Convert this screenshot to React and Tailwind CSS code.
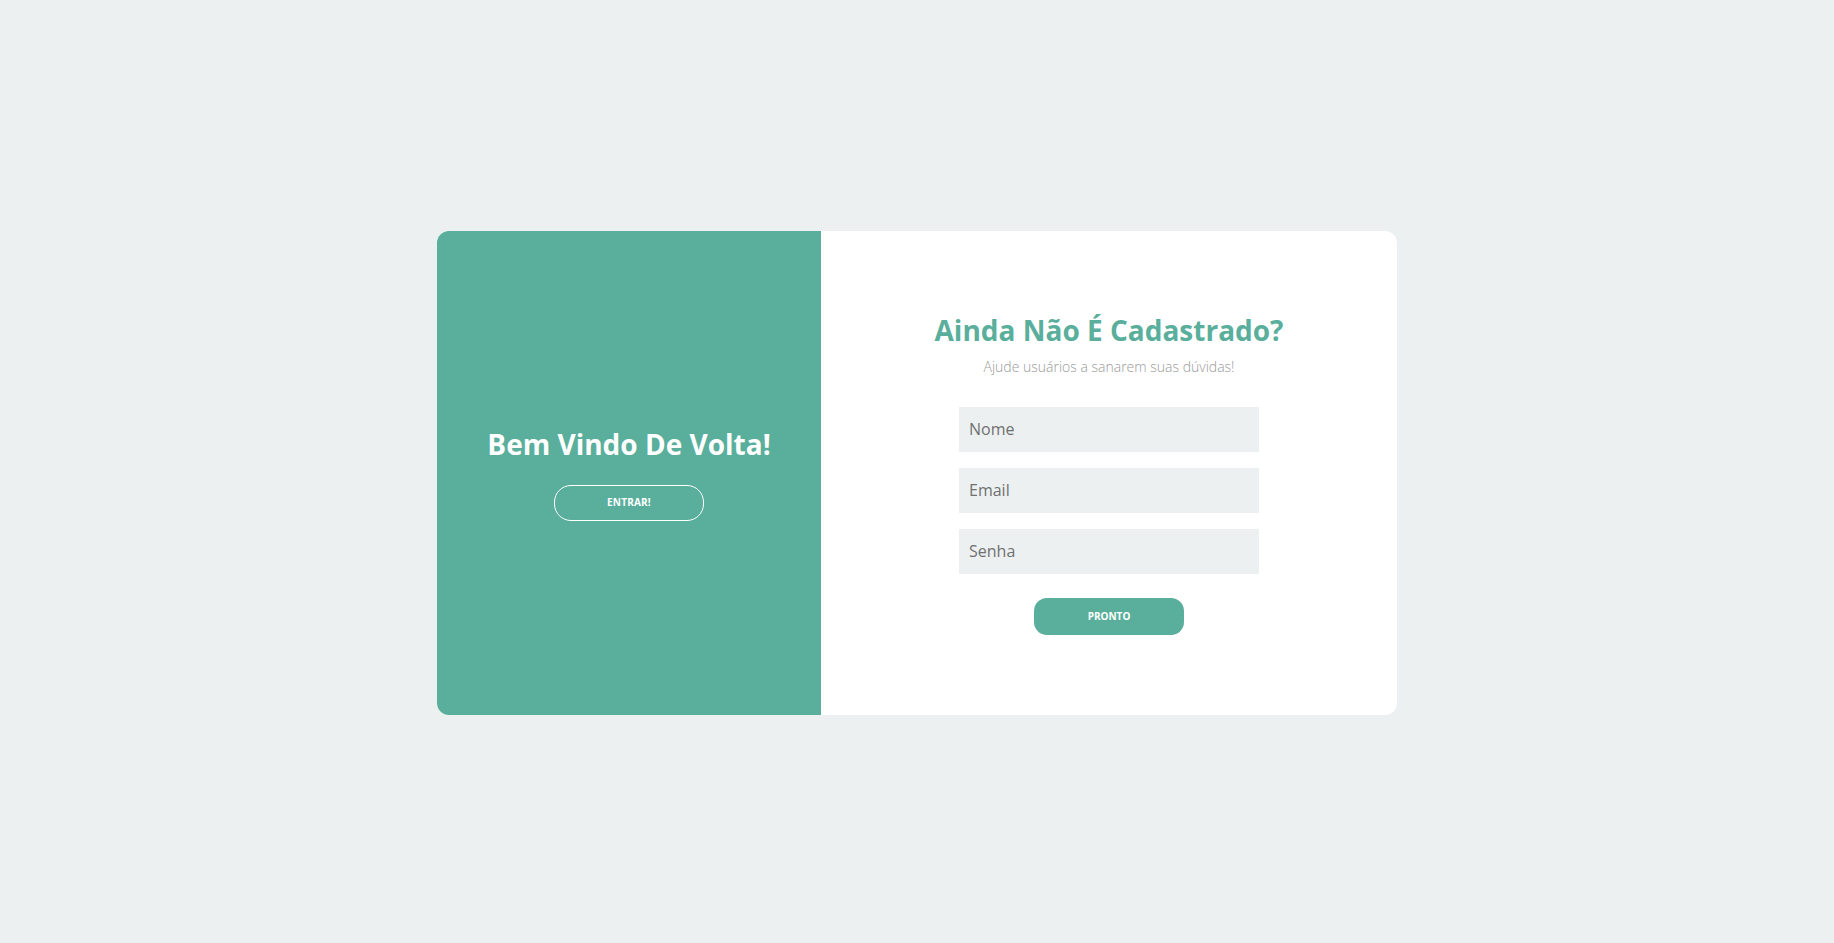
import React from 'react';

const App = () => {
  return (
    <div
      className="min-h-screen w-full flex items-center justify-center bg-[#ecf0f1]"
      style={{ fontFamily: '"Open Sans", "Noto Sans", sans-serif' }}
    >
      <div className="w-[960px] h-[484px] flex rounded-[12px] overflow-hidden bg-white mt-[3px]">
        {/* Left panel */}
        <div className="w-[384px] h-full bg-[#59af9c] flex flex-col items-center justify-center">
          <h2 className="text-[28px] leading-[36px] font-bold text-white">
            Bem Vindo De Volta!
          </h2>
          <button className="mt-[23px] w-[150px] h-[36px] rounded-[17px] border border-white text-white text-[10px] font-bold tracking-[0.2px]">
            ENTRAR!
          </button>
        </div>

        {/* Right panel */}
        <div className="flex-1 h-full flex flex-col items-center justify-center">
          <h1 className="text-[28px] leading-[36px] font-bold text-[#59af9c]">
            Ainda Não É Cadastrado?
          </h1>
          <p className="mt-[9px] text-[14px] leading-[20px] font-light text-[#9a9a9a]">
            Ajude usuários a sanarem suas dúvidas!
          </p>
          <form className="mt-[30px] flex flex-col items-center gap-[16px]">
            <input
              type="text"
              placeholder="Nome"
              className="w-[300px] h-[45px] px-[10px] bg-[#ecf0f1] text-[16px] text-[#666] placeholder:text-[#707070] outline-none"
            />
            <input
              type="email"
              placeholder="Email"
              className="w-[300px] h-[45px] px-[10px] bg-[#ecf0f1] text-[16px] text-[#666] placeholder:text-[#707070] outline-none"
            />
            <input
              type="password"
              placeholder="Senha"
              className="w-[300px] h-[45px] px-[10px] bg-[#ecf0f1] text-[16px] text-[#666] placeholder:text-[#707070] outline-none"
            />
            <button
              type="button"
              className="mt-[8px] w-[150px] h-[37px] rounded-[13px] bg-[#59af9c] text-white text-[10px] font-bold"
            >
              PRONTO
            </button>
          </form>
        </div>
      </div>
    </div>
  );
};

export default App;
